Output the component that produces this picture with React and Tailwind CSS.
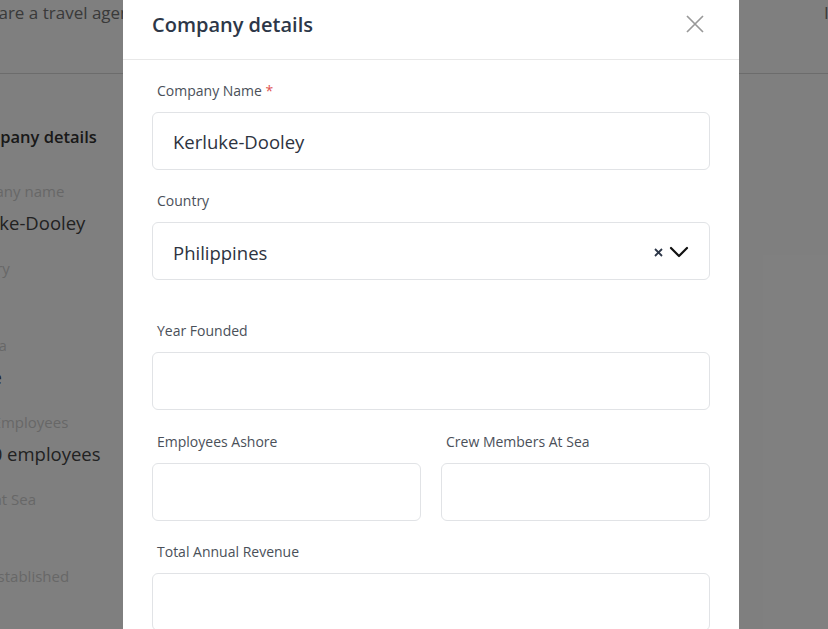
import React from 'react';

const font = { fontFamily: '"Open Sans", "Noto Sans", sans-serif' };

const bgFields = [
  { label: 'Company name', value: 'Kerluke-Dooley' },
  { label: 'Country', value: '\u00a0' },
  { label: 'Agenda', value: 'Large' },
  { label: 'Total Employees', value: '11-50 employees' },
  { label: 'Crew at Sea', value: '\u00a0' },
  { label: 'Year established', value: '\u00a0' },
];

const Field = ({ label, required, children, className = '' }) => (
  <div className={className}>
    <label className="block pl-[5px] mb-[11px] text-[14px] leading-5 text-[#4a5059]">
      {label}
      {required && <span className="text-[#e05252]"> *</span>}
    </label>
    {children}
  </div>
);

const Input = ({ value }) => (
  <div className="h-[58px] rounded-md border border-[#e1e3e6] flex items-center pt-[2px] px-[20px] text-[18.5px] text-[#2d3340]">
    {value}
  </div>
);

const App = () => {
  return (
    <div className="relative w-full h-[629px] overflow-hidden bg-white" style={font}>
      {/* page behind the modal */}
      <div className="flex flex-col">
        <div className="h-[74px] border-b border-[#d8d8d8] flex justify-between">
          <p className="-ml-[50px] pt-[1px] text-[17px] leading-6 text-[#747474] whitespace-nowrap">
            If you are a travel agent, please contact us directly.
          </p>
          <p className="pt-[1px] text-[17px] leading-6 text-[#747474] whitespace-nowrap -mr-[40px]">
            If you
          </p>
        </div>
        <div className="pt-[49px]">
          <h2 className="-ml-[36px] text-[16.5px] leading-7 font-semibold text-[#333] mb-[28px] whitespace-nowrap">Company details</h2>
          <div className="-ml-[46px] flex flex-col gap-[19px]">
            {bgFields.map(f => (
              <div key={f.label}>
                <div className="text-[15px] leading-6 text-[#cfcfcf] whitespace-nowrap">{f.label}</div>
                <div className="mt-[6px] text-[18.5px] leading-7 text-[#444] whitespace-nowrap">{f.value}</div>
              </div>
            ))}
          </div>
        </div>
      </div>

      {/* overlay */}
      <div className="absolute inset-0 bg-black/50" />

      {/* modal */}
      <div className="absolute left-[123px] top-0 w-[616px] h-[640px] bg-white flex flex-col">
        <div className="h-[60px] border-b border-[#e8e8e8] flex items-start justify-between pl-[29px] pr-[35px] pt-[11px]">
          <h3 className="text-[20px] leading-7 font-semibold text-[#2d3748]">Company details</h3>
          <button className="mt-[4px] text-[#999]">
            <svg width="18" height="18" viewBox="0 0 18 18" fill="none" stroke="currentColor" strokeWidth="1.7">
              <path d="M1 1l16 16M17 1L1 17" />
            </svg>
          </button>
        </div>

        <div className="px-[29px] pt-[21px] flex flex-col">
          <Field label="Company Name" required>
            <Input value="Kerluke-Dooley" />
          </Field>

          <Field label="Country" className="mt-[21px]">
            <div className="h-[58px] rounded-md border border-[#e1e3e6] flex items-center justify-between pl-[20px] pr-[20px] text-[18.5px] text-[#2d3340]">
              <span className="pt-[3px]">Philippines</span>
              <span className="flex items-center gap-[6px] pt-[2px]">
                <svg width="9" height="9" viewBox="0 0 9 9" stroke="#2d3748" strokeWidth="1.8">
                  <path d="M1 1l7 7M8 1L1 8" />
                </svg>
                <svg width="20" height="12" viewBox="0 0 20 12" fill="none" stroke="#111" strokeWidth="2.2" strokeLinecap="round" strokeLinejoin="round">
                  <path d="M2 2l8 8 8-8" />
                </svg>
              </span>
            </div>
          </Field>

          <Field label="Year Founded" className="mt-[41px]">
            <Input value="" />
          </Field>

          <div className="mt-[22px] grid grid-cols-2 gap-x-5">
            <Field label="Employees Ashore">
              <Input value="" />
            </Field>
            <Field label="Crew Members At Sea">
              <Input value="" />
            </Field>
          </div>

          <Field label="Total Annual Revenue" className="mt-[21px]">
            <Input value="" />
          </Field>
        </div>
      </div>
    </div>
  );
};

export default App;
